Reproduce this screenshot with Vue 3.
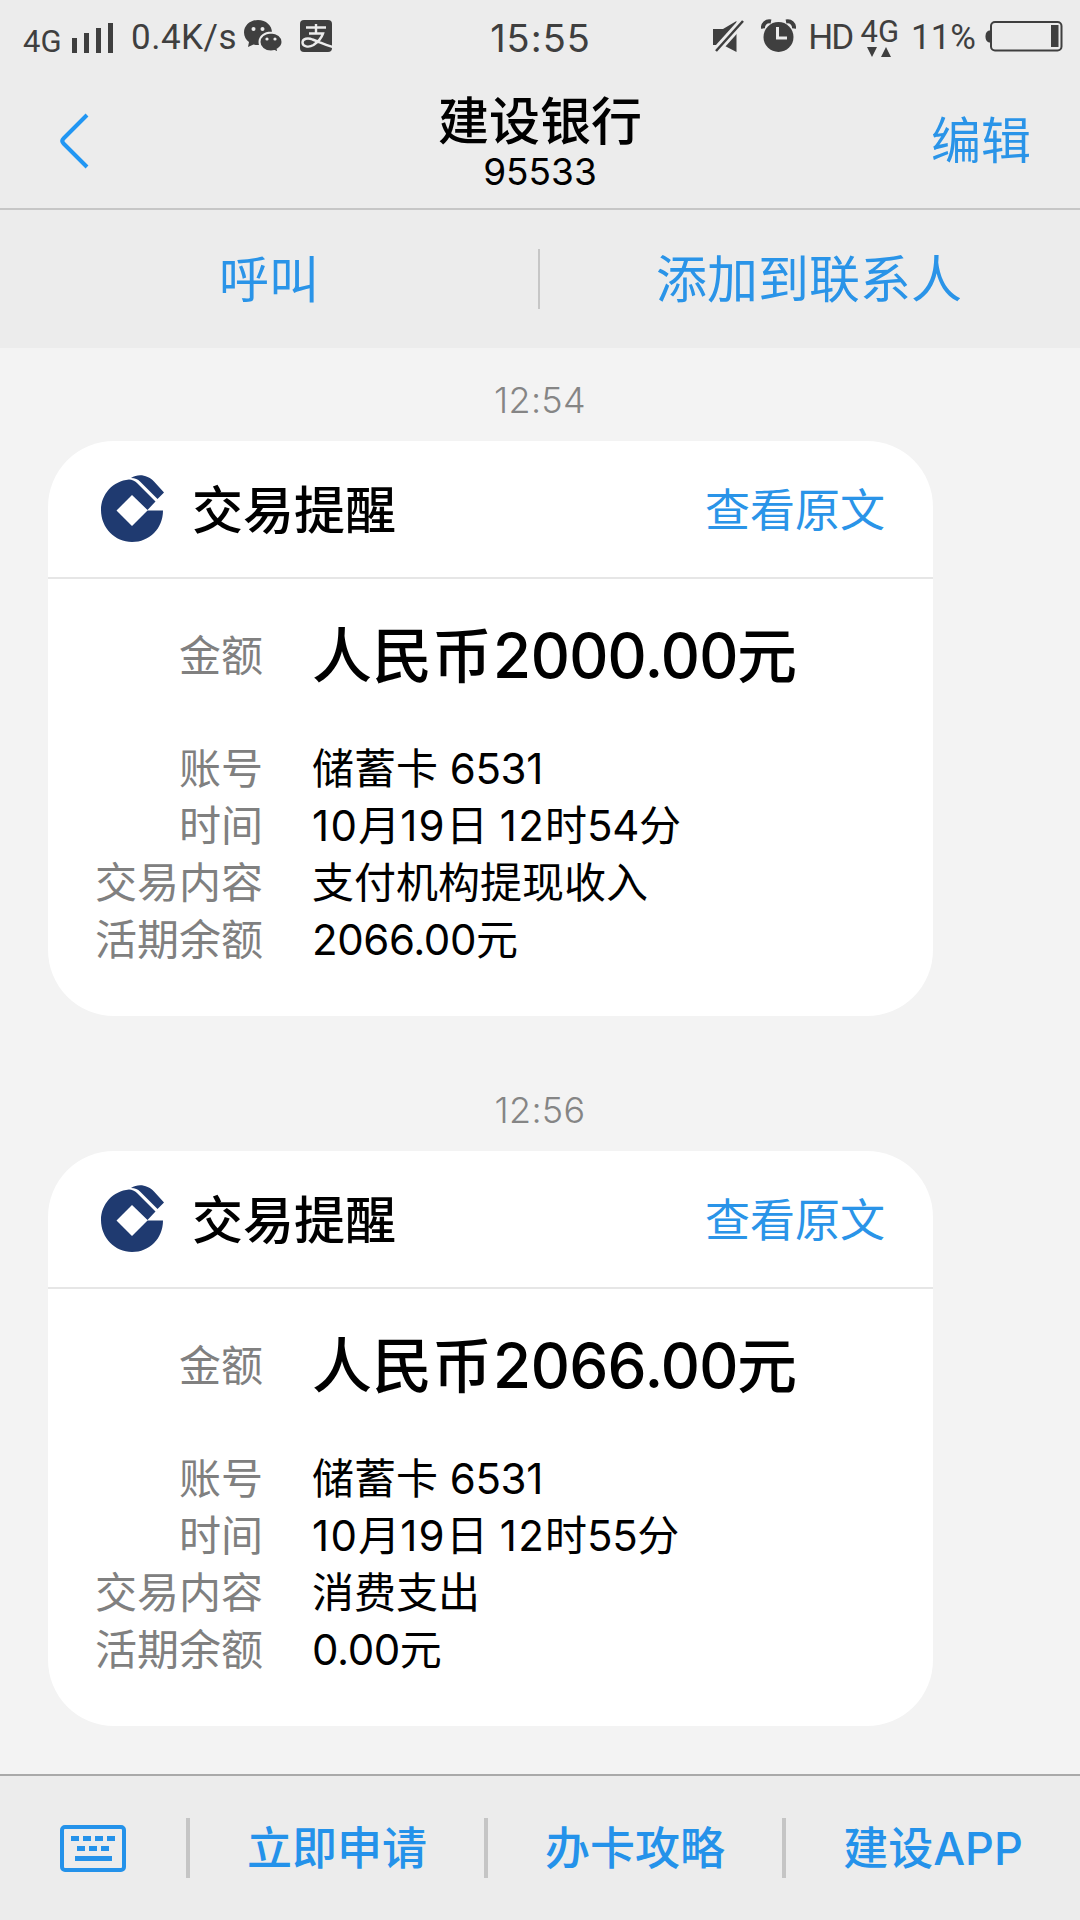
<script setup>
import { ref } from "vue";

const quickReplies = ref(["立即申请", "办卡攻略", "建设APP"]);

const messages = ref([
  {
    time: "12:54",
    amount: "2000.00",
    rows: [
      { label: "账号", value: "储蓄卡 6531" },
      { label: "时间", value: "10月19日 12时54分" },
      { label: "交易内容", value: "支付机构提现收入" },
      { label: "活期余额", value: "2066.00元" },
    ],
  },
  {
    time: "12:56",
    amount: "2066.00",
    rows: [
      { label: "账号", value: "储蓄卡 6531" },
      { label: "时间", value: "10月19日 12时55分" },
      { label: "交易内容", value: "消费支出" },
      { label: "活期余额", value: "0.00元" },
    ],
  },
]);

// 把数字和文字拆开，数字单独设置字距
const split = (text) => text.match(/[\d.]+|[^\d.]+/g);
const partClass = (text) => ({
  digits: /^\d/.test(text),
  // 1 开头的数字太窄，稍微拉开
  wide: text.startsWith("1"),
});
</script>

<template>
  <div class="page">
    <!-- 状态栏 -->
    <div class="status">
      <div class="side">
        <span class="net">4G</span>
        <svg class="signal" width="42" height="30" viewBox="0 0 42 30">
          <path d="M0 15h5v15H0zM12 10h5v20h-5zM24 5h5v25h-5zM36 0h5v30h-5z" />
        </svg>
        <span class="speed">0.4K/s</span>
        <svg class="wechat" width="40" height="34" viewBox="0 0 40 34">
          <path
            d="M14 0C6.200 0 0 5.500 0 12.500c0 4 2 7.300 5 9.500l-1 5 5.500-2.500c1.500.4 3 .6 4.500.6C22 25 28 19.500 28 12.500S22 0 14 0z"
          />
          <path
            class="halo"
            d="M27 12.500c-6.500 0-11.500 4.200-11.500 9.500S20.500 31.500 27 31.500c1.300 0 2.500-.2 3.600-.5l4 2-.9-3.700c3-1.800 4.800-4.300 4.800-7.300 0-5.300-5-9.500-11.500-9.500z"
          />
          <g class="eye">
            <circle cx="9.500" cy="9" r="2" />
            <circle cx="18.500" cy="9" r="2" />
            <circle cx="23" cy="19" r="1.600" />
            <circle cx="31" cy="19" r="1.600" />
          </g>
        </svg>
        <svg class="alipay" width="32" height="32" viewBox="0 0 32 32">
          <rect width="32" height="32" rx="4" />
          <path
            class="line"
            d="M6 7.500h20M16 4v9.500M9 13.500h14C21.500 18 18 22 13.500 25 8.500 28 2.500 26.500 2.500 22.500c0-4 5.500-5 10-3 6 2 12 5 20 7.500"
          />
        </svg>
      </div>
      <span class="clock">15:55</span>
      <div class="side">
        <svg class="mute" width="32" height="34" viewBox="0 0 32 34">
          <path d="M0 10h10L23.500 2v31L10 26H0z" />
          <path class="gap" d="M3 32L30 2" />
          <path class="slash" d="M3 32L30 2" />
        </svg>
        <svg class="alarm" width="35" height="34" viewBox="0 0 35 34">
          <circle cx="17.500" cy="18" r="15" />
          <path class="bell" d="M2 9.500C1.500 5 5 1.500 10 2.500M33 9.500c.5-4.500-3-8-8-7" />
          <path class="hand" d="M16.500 8v11H26" />
        </svg>
        <span class="hd">HD</span>
        <div class="data">
          <span>4G</span>
          <svg width="26" height="10" viewBox="0 0 26 10">
            <path d="M0 0h10L5 10zM14 10h10L19 0z" />
          </svg>
        </div>
        <span class="percent">11%</span>
        <svg class="battery" width="78" height="31" viewBox="0 0 78 31">
          <path d="M5 9.500C2 9.500.5 12 .5 15.500S2 21.500 5 21.500z" />
          <rect class="shell" x="6" y="1" width="70.500" height="28.500" rx="4" />
          <rect x="66" y="4" width="7.500" height="22" />
        </svg>
      </div>
    </div>

    <!-- 标题栏 -->
    <header class="header">
      <svg class="back" width="32" height="58" viewBox="0 0 32 58">
        <path d="M29 3L5.500 26.500q-2.500 2.500 0 5L29 55" />
      </svg>
      <div class="title">
        <div class="name">建设银行</div>
        <div class="number">95533</div>
      </div>
      <span class="edit">编辑</span>
    </header>

    <div class="actions">
      <span>呼叫</span>
      <i></i>
      <span>添加到联系人</span>
    </div>

    <!-- 消息列表 -->
    <main class="list">
      <section v-for="msg in messages" :key="msg.time" class="message">
        <div class="time">{{ msg.time }}</div>
        <article class="card">
          <div class="card-head">
            <svg class="logo" width="64" height="68" viewBox="0 0 64 68">
              <path
                d="M28 4.500C12 6 0 19 0 35c0 18 14 32 31 32 17.500 0 31-13.500 31-31.500H46.500L31 51 15.500 35.500 31 20l15.500 15 8-8.500L36 8q-3.500-3.500-8-3.500z"
              />
              <path d="M30 3c8-5 17-2.500 23 3.500l10 11-6.500 6.500L39 6.500Q36 3 30 3z" />
            </svg>
            <span class="card-title">交易提醒</span>
            <span class="origin">查看原文</span>
          </div>
          <div class="card-body">
            <div class="row amount">
              <span class="label">金额</span>
              <span class="value">人民币<b>{{ msg.amount }}</b>元</span>
            </div>
            <div v-for="row in msg.rows" :key="row.label" class="row">
              <span class="label">{{ row.label }}</span>
              <span class="value"
                ><span
                  v-for="(part, i) in split(row.value)"
                  :key="i"
                  :class="partClass(part)"
                  >{{ part }}</span
                ></span
              >
            </div>
          </div>
        </article>
      </section>
    </main>

    <!-- 底部菜单 -->
    <footer class="footer">
      <div class="keyboard">
        <svg width="66" height="47" viewBox="0 0 66 47">
          <rect class="frame" x="2" y="2" width="62" height="43" rx="3" />
          <path
            d="M11 11h8v5h-8zM23 11h8v5h-8zM35 11h8v5h-8zM47 11h8v5h-8zM17 21h8v5h-8zM29 21h8v5h-8zM41 21h8v5h-8zM15 31h37v5H15z"
          />
        </svg>
      </div>
      <div v-for="item in quickReplies" :key="item" class="menu">{{ item }}</div>
    </footer>
  </div>
</template>

<style>
body {
  margin: 0;
}
</style>

<style scoped>
.page {
  display: flex;
  flex-direction: column;
  width: 1080px;
  height: 1920px;
  overflow: hidden;
  background: #f3f3f3;
  color: #000;
  font-family: Inter, "Noto Sans CJK SC", sans-serif;
  white-space: nowrap;
}

svg {
  display: block;
  flex: none;
}

/* 状态栏 */
.status {
  display: flex;
  justify-content: space-between;
  height: 74px;
  padding: 0 17px 0 24px;
  background: #ececec;
  color: #3f3f3f;
  fill: #3f3f3f;
  font-family: Roboto, sans-serif;
  font-size: 34px;
  line-height: 76px;
}

.side {
  display: flex;
  flex: none;
  width: 460px;
}

.side:last-child {
  justify-content: flex-end;
}

.net {
  width: 48px;
  margin-left: -1px;
  font-size: 31px;
  line-height: 84px;
}

.signal {
  margin: 23px 0 0 1px;
}

.speed {
  width: 113px;
  margin-left: 17px;
  font-size: 35px;
  letter-spacing: 0.5px;
}

.wechat {
  margin-top: 20px;
}

.halo {
  stroke: #ececec;
  stroke-width: 2;
}

.eye {
  fill: #ececec;
}

.alipay {
  margin: 20px 0 0 16px;
}

.line {
  fill: none;
  stroke: #ececec;
  stroke-width: 2.400;
}

.clock {
  flex: 1;
  margin-left: -6px;
  font-family: Inter, sans-serif;
  font-size: 38px;
  letter-spacing: 1px;
  text-align: center;
}

.mute {
  margin-top: 19px;
}

.gap {
  stroke: #ececec;
  stroke-width: 8;
}

.slash {
  stroke: #3f3f3f;
  stroke-width: 2.500;
}

.alarm {
  margin: 19px 0 0 16px;
}

.bell {
  fill: none;
  stroke: #3f3f3f;
  stroke-width: 4;
}

.hand {
  fill: none;
  stroke: #ececec;
  stroke-width: 3;
}

.hd {
  margin-left: 12px;
  font-size: 35px;
  letter-spacing: -1.8px;
}

.data {
  margin: 16px 0 0 8px;
  font-size: 31px;
  line-height: 31px;
}

.data svg {
  margin-left: 7px;
}

.percent {
  margin-left: 12px;
  font-size: 35px;
}

.battery {
  margin: 21px 0 0 9px;
}

.shell {
  fill: none;
  stroke: #3f3f3f;
  stroke-width: 2;
}

/* 标题栏 */
.header {
  display: flex;
  align-items: center;
  justify-content: space-between;
  box-sizing: border-box;
  height: 136px;
  padding: 0 49px 0 58px;
  border-bottom: 2px solid #c6c6c6;
  background: #ececec;
}

.back {
  margin-right: 59px;
  fill: none;
  stroke: #2196f3;
  stroke-width: 4;
}

.title {
  padding-top: 4px;
  text-align: center;
}

.name {
  font-size: 51px;
  font-weight: 500;
  line-height: 56px;
}

.number {
  font-size: 37px;
  line-height: 43px;
}

.edit,
.actions {
  color: #2a94e8;
  font-size: 50px;
}

.edit {
  padding-bottom: 8px;
}

.actions {
  display: flex;
  align-items: center;
  height: 138px;
  background: #ececec;
}

.actions span {
  flex: 1;
  padding-bottom: 7px;
  text-align: center;
}

.actions span:last-child {
  padding-right: 2px;
  font-size: 51px;
}

.actions i {
  width: 2px;
  height: 60px;
  background: #c6c6c6;
}

/* 消息 */
.list {
  flex: 1;
}

.message {
  height: 710px;
}

.time {
  height: 93px;
  color: #858585;
  font-size: 36px;
  font-weight: 300;
  letter-spacing: 0.3px;
  line-height: 104px;
  text-align: center;
}

.card {
  box-sizing: border-box;
  width: 885px;
  height: 575px;
  margin-left: 48px;
  border-radius: 66px;
  background: #fff;
}

.card-head {
  display: flex;
  align-items: center;
  box-sizing: border-box;
  height: 138px;
  padding: 0 48px 0 53px;
  border-bottom: 2px solid #e6e6e6;
}

.logo {
  fill: #1f3a70;
}

.card-title {
  flex: 1;
  margin-left: 27px;
  padding-bottom: 5px;
  font-size: 51px;
  font-weight: 500;
}

.origin {
  padding-bottom: 4px;
  color: #2a94e8;
  font-size: 45px;
}

.card-body {
  padding-top: 37px;
}

.row {
  display: flex;
  height: 57px;
  font-size: 42px;
  line-height: 57px;
}

.row .label {
  width: 215px;
  color: #808080;
  text-align: right;
}

.row .value {
  margin-left: 49px;
  white-space: pre;
}

.digits {
  letter-spacing: -0.400px;
}

.digits.wide {
  letter-spacing: 1.300px;
}

.row.amount {
  height: 124px;
  line-height: 80px;
}

.amount .value {
  font-size: 60px;
  font-weight: 500;
}

.amount b {
  font-size: 62px;
  font-variant-numeric: tabular-nums;
  font-weight: 500;
  letter-spacing: -1.800px;
}

/* 底部菜单 */
.footer {
  display: flex;
  align-items: center;
  box-sizing: border-box;
  height: 146px;
  border-top: 2px solid #a9a9a9;
  background: #ececec;
  color: #2492ea;
  font-size: 45px;
}

.keyboard {
  width: 126px;
  padding-left: 60px;
  fill: #2492ea;
}

.frame {
  fill: none;
  stroke: #2492ea;
  stroke-width: 4;
}

.menu {
  flex: 1;
  height: 60px;
  border-left: 4px solid #c5c5c5;
  font-weight: 500;
  line-height: 61px;
  text-align: center;
}
</style>
